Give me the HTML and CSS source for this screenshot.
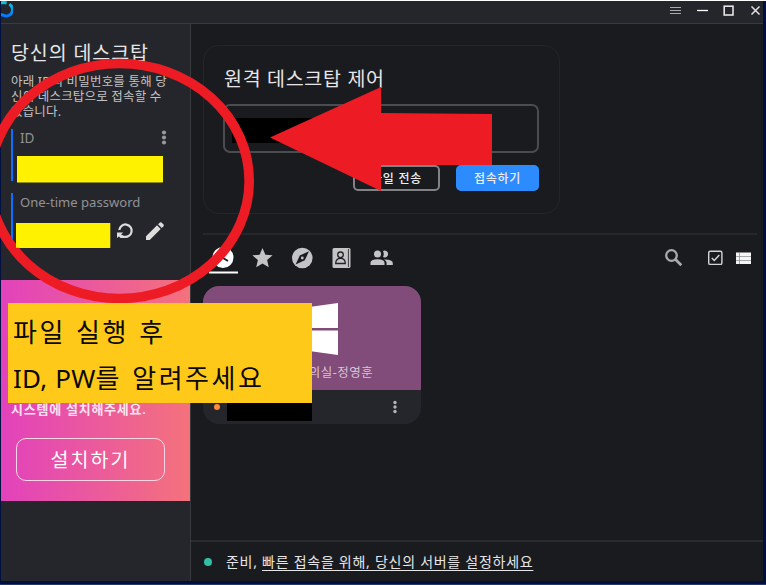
FILE: index.html
```
<!DOCTYPE html>
<html lang="ko">
<head>
<meta charset="utf-8">
<title>원격 데스크탑</title>
<link rel="stylesheet" href="styles.css">
</head>
<body>
<div class="window">
  <header class="titlebar">
    <svg class="logo" width="12" height="22" viewBox="0 0 12 22"><defs><linearGradient id="lg" x1="0" y1="0" x2="0" y2="1"><stop offset="0" stop-color="#00c8e0"/><stop offset="1" stop-color="#0878ff"/></linearGradient></defs><path d="M8.300 3.300A6 6 0 0 1 2.500 14.200Q0 14-2.500 12M-1 2.400Q2 .8 5.600 2" fill="none" stroke="url(#lg)" stroke-width="3"/></svg>
    <svg class="controls" width="95" height="22" viewBox="0 0 95 22" fill="none" stroke="#e4e4e6"><path d="M2 6.500h11M2 9.500h11M2 12.500h11" stroke="#aaaaae"/><path d="M29 9.500h11" stroke="#fff" stroke-width="1.300"/><rect x="56.200" y="5.200" width="8.800" height="8.800" stroke-width="1.600"/><path d="M83.500 5.500l8 8M91.500 5.500l-8 8" stroke-width="1.500"/></svg>
  </header>
  <div class="content">
    <aside class="sidebar">
      <h1 class="side-title">당신의 데스크탑</h1>
      <p class="side-desc">아래 ID의 비밀번호를 통해 당<br>신의 데스크탑으로 접속할 수<br>있습니다.</p>
      <section class="field field-id">
        <div class="field-head"><span>ID</span>
          <svg width="6" height="16" viewBox="0 0 6 16" fill="#98989b"><circle cx="3" cy="2.500" r="2.100"/><circle cx="3" cy="7.500" r="2.100"/><circle cx="3" cy="12.500" r="2.100"/></svg>
        </div>
        <div class="redacted-id"></div>
      </section>
      <section class="field field-pw">
        <div class="field-head"><span class="pw-label">One-time password</span></div>
        <div class="pw-row">
          <div class="redacted-pw"></div>
          <svg class="refresh" width="18" height="18" viewBox="0 0 18 18" fill="none" stroke="#ddd"><path d="M3.300 8A6.200 6.200 0 1 1 8 14.700" stroke-width="2.200"/><path d="M1 16V10.500h6.200L5 12.600l3 1.200v2.200H4.500L3 14.500z" fill="#ddd" stroke="none"/></svg>
          <svg class="pencil" width="18" height="18" viewBox="0 0 18 18" fill="#ddd"><path d="M0 14.200L11 3.200l3.700 3.700-11 11H0zM12 2.200L14 .5q.8-.5 1.500.1l2 2q.7.8 0 1.600l-1.700 1.700z"/></svg>
        </div>
      </section>
      <section class="install">
        <p>시스템에 설치해주세요.</p>
        <button class="install-btn">설치하기</button>
      </section>
    </aside>
    <main class="main">
      <section class="connect">
        <h2>원격 데스크탑 제어</h2>
        <div class="remote-input"><div class="redacted-remote"></div></div>
        <div class="actions"><button class="btn">파일 전송</button><button class="btn primary">접속하기</button></div>
      </section>
      <nav class="tabs">
        <svg width="190" height="39" viewBox="0 0 190 39" fill="#c4c4c6">
          <circle cx="20" cy="22.500" r="10.500" fill="#fff"/><path d="M20 16v7l5 3" fill="none" stroke="#1a1b1f" stroke-width="1.800"/><path d="M6 37.500h29" stroke="#fff" stroke-width="2"/>
          <path d="M59.500 13l2.900 6.700 7.200.6-5.500 4.800 1.700 7.100-6.300-3.800-6.300 3.800 1.700-7.100-5.500-4.800 7.200-.6z"/>
          <circle cx="99.300" cy="23" r="10.300"/><path d="M106 16.300l-4.200 8.900-9.200 4.200 4.200-9z" fill="#1a1b1f"/><circle cx="99.300" cy="23" r="1.400"/>
          <rect x="129.500" y="13" width="18" height="20" rx="1.600"/><path d="M145.400 14v18" stroke="#3b3c40" stroke-width="1"/><circle cx="137.500" cy="19.800" r="2.800" fill="none" stroke="#222327" stroke-width="1.300"/><path d="M132.700 28.500q0-5.200 4.800-5.200t4.800 5.200z" fill="none" stroke="#222327" stroke-width="1.300"/>
          <circle cx="174.500" cy="19" r="3.500"/><path d="M167.500 30v-2.200q0-3.500 7-3.500t7 3.500V30z"/><path d="M180 15.900a3.500 3.500 0 1 1 0 6.200q1.500-3.100 0-6.200M181 24.400q8.800-.2 8.800 3.700V30h-6.200v-2.200q0-2-2.600-3.400"/>
        </svg>
        <svg width="88" height="30" viewBox="0 0 88 30" fill="none"><circle cx="7.500" cy="12.500" r="5.300" stroke="#aaaaad" stroke-width="2.300"/><path d="M11.300 16.300l6 6" stroke="#aaaaad" stroke-width="2.700"/><rect x="44.700" y="8.200" width="13.200" height="13.200" rx="1.500" stroke="#d5d5d8" stroke-width="1.400"/><path d="M47.800 15l2.500 2.500 5-5.500" stroke="#d5d5d8" stroke-width="1.500"/><path d="M72 9.500h15v11.500H72z" fill="#f5f5f5"/><path d="M72 13.500h15M72 17.500h15M75.500 10v11" stroke="#85868a" stroke-width=".7"/></svg>
      </nav>
      <article class="peer">
        <div class="peer-screen">
          <svg width="52" height="52" viewBox="0 0 52 52" fill="#fff"><path d="M0 7.500L23 4v21H0zM25 3.700L52 0v25H25zM0 27.500h23v21L0 44.500zM25 27.500h27V52l-27-3.700z"/></svg>
          <span>회의실-정영훈</span>
        </div>
        <div class="peer-foot"><i class="dot orange"></i><div class="redacted-peer"></div>
          <svg width="6" height="14" viewBox="0 0 6 14" fill="#b4b4b7"><circle cx="3" cy="2.500" r="1.700"/><circle cx="3" cy="7" r="1.700"/><circle cx="3" cy="11.500" r="1.700"/></svg>
        </div>
      </article>
      <footer class="status"><i class="dot green"></i><span>준비, <span class="link">빠른 접속을 위해, 당신의 서버를 설정하세요</span></span></footer>
    </main>
  </div>
</div>
<svg class="marks" width="766" height="585" viewBox="0 0 766 585"><path d="M270 137.500L381 87v26l111 1v51H381v26z" fill="#ed1c24"/><ellipse cx="119.500" cy="181" rx="129.700" ry="117.500" fill="none" stroke="#ed1c24" stroke-width="9.700"/><path d="M17 156.300h145.700v26.200H17zM16 223h94.300v24.700H16z" fill="#fff200"/></svg>
<div class="callout"><div class="line1">파일 실행 후</div><div class="line2"><span class="latin">ID, PW</span>를 알려주세요</div></div>
</body>
</html>
```
FILE: styles.css
```
* { box-sizing: border-box; }
body { margin: 0; width: 766px; height: 585px; overflow: hidden; position: relative; background: #001040; border-top: 1px solid #fff; border-bottom: 1px solid #253866; font-family: "Noto Sans", "Noto Sans CJK KR", sans-serif; color: #e6e6e8; }
h1, h2, p { margin: 0; font-weight: 400; }
button { padding: 0; font-family: inherit; }
svg { display: block; flex: none; }
.window { width: 762px; height: 580px; margin-left: 1px; background: #1a1b1f; display: flex; flex-direction: column; }
.titlebar { height: 23px; flex: none; background: #25262b; border-bottom: 1px solid #3a3b3f; display: flex; justify-content: space-between; }
.content { flex: 1; display: flex; min-height: 0; }
.sidebar { width: 190px; flex: none; background: #25262b; border-right: 1px solid #38393d; }
.side-title { margin: 15px 0 0 10px; height: 28px; line-height: 28px; font-size: 19.5px; letter-spacing: .9px; white-space: nowrap; }
.side-desc { margin: 7px 0 0 10px; height: 45px; font-size: 12.5px; letter-spacing: .18px; line-height: 15px; color: #c2c2c4; white-space: nowrap; }
.field { margin-left: 10px; width: 160px; border-left: 2px solid #0a71ff; }
.field-id { margin-top: 10px; height: 52px; }
.field-pw { margin-top: 12px; height: 53px; }
.field-head { display: flex; justify-content: space-between; align-items: center; height: 17px; padding: 0 4px 0 7px; font-size: 13.5px; color: #929295; }
.pw-label { white-space: nowrap; font-size: 13.1px; padding-top: 1px; }
.redacted-id { margin: 10px 0 0 4px; width: 146px; height: 26px; background: #fff200; }
.pw-row { display: flex; margin: 13px 0 0 3px; }
.redacted-pw { width: 94px; height: 25px; background: #fff200; }
.refresh { margin-left: 6px; }
.pencil { margin-left: 12px; }
.refresh, .pencil { margin-top: -1px; }
.install { margin-top: 34px; height: 221px; width: 189px; padding-top: 119px; background: linear-gradient(90deg, #e242bc, #f4727c); color: #fff; }
.install p { margin-left: 10px; height: 20px; line-height: 20px; font-size: 13px; letter-spacing: .75px; font-weight: 600; color: #fbe0ef; }
.install-btn { display: block; margin: 19px 0 0 15px; width: 149px; height: 43px; border: 1.500px solid #fbd5e6; border-radius: 10px; background: none; color: #fff; font-size: 19.5px; letter-spacing: 2px; padding-bottom: 2px; }
.main { flex: 1; display: flex; flex-direction: column; min-width: 0; }
.connect { margin: 21px 0 0 12px; width: 357px; height: 169px; flex: none; border: 1px solid #24252a; border-radius: 16px; padding: 19px 20px 0 19px; }
.connect h2 { height: 28px; line-height: 28px; font-size: 19.5px; letter-spacing: .7px; padding-left: 1px; }
.remote-input { margin-top: 11px; height: 49px; border: 2px solid #4b4b50; border-radius: 7px; padding: 12px 7px; }
.redacted-remote { width: 150px; height: 25px; background: #000; }
.actions { display: flex; justify-content: flex-end; gap: 16px; margin-top: 12px; }
.btn { width: 87px; height: 26px; border: 2px solid #828286; border-radius: 5px; background: none; color: #eee; font-size: 12px; letter-spacing: .7px; font-weight: 500; }
.primary { width: 83px; background: #2c8cff; border-color: #2c8cff; }
.tabs { margin: 19px 6px 0 12px; height: 40px; flex: none; border-top: 2px solid #26272b; display: flex; justify-content: space-between; align-items: flex-start; }
.tabs svg:last-child { margin: 8px 5px 0 0; }
.peer { margin: 13px 0 0 12px; width: 218px; height: 138px; flex: none; border-radius: 16px; overflow: hidden; background: #25262b; }
.peer-screen { height: 104px; background: #814c79; display: flex; flex-direction: column; align-items: center; padding: 17px 0 0 50px; }
.peer-screen svg { margin-right: 51px; }
.peer-screen span { font-size: 12.5px; line-height: 18px; margin-top: 9px; margin-right: 4px; color: #d8c4d6; letter-spacing: .5px; }
.peer-foot { height: 34px; display: flex; align-items: center; padding-left: 11px; }
.peer-foot .dot { margin-right: 7px; }
.redacted-peer { width: 85px; height: 31px; align-self: flex-start; background: #000; }
.peer-foot svg { margin-left: 80px; }
.dot { width: 6px; height: 6px; border-radius: 50%; flex: none; }
.orange { background: #ff8a3c; }
.green { width: 8px; height: 8px; background: #32bea6; }
.status { margin-top: auto; height: 41px; flex: none; border-top: 2px solid #2b2c30; display: flex; align-items: center; gap: 14px; padding-left: 13px; font-size: 14px; letter-spacing: .73px; white-space: nowrap; }
.status > span { margin-top: -2px; }
.link { text-decoration: underline; text-underline-offset: 3px; }
.marks { position: absolute; left: 0; top: -1px; }
.callout { position: absolute; left: 8px; top: 302px; width: 304px; height: 100px; background: #ffc91a; color: #0c0900; font-size: 26px; letter-spacing: 2.500px; word-spacing: 1px; padding: 6px 0 0 5px; white-space: nowrap; }
.latin { letter-spacing: .2px; }
.line1, .line2 { height: 46px; line-height: 46px; }
```
